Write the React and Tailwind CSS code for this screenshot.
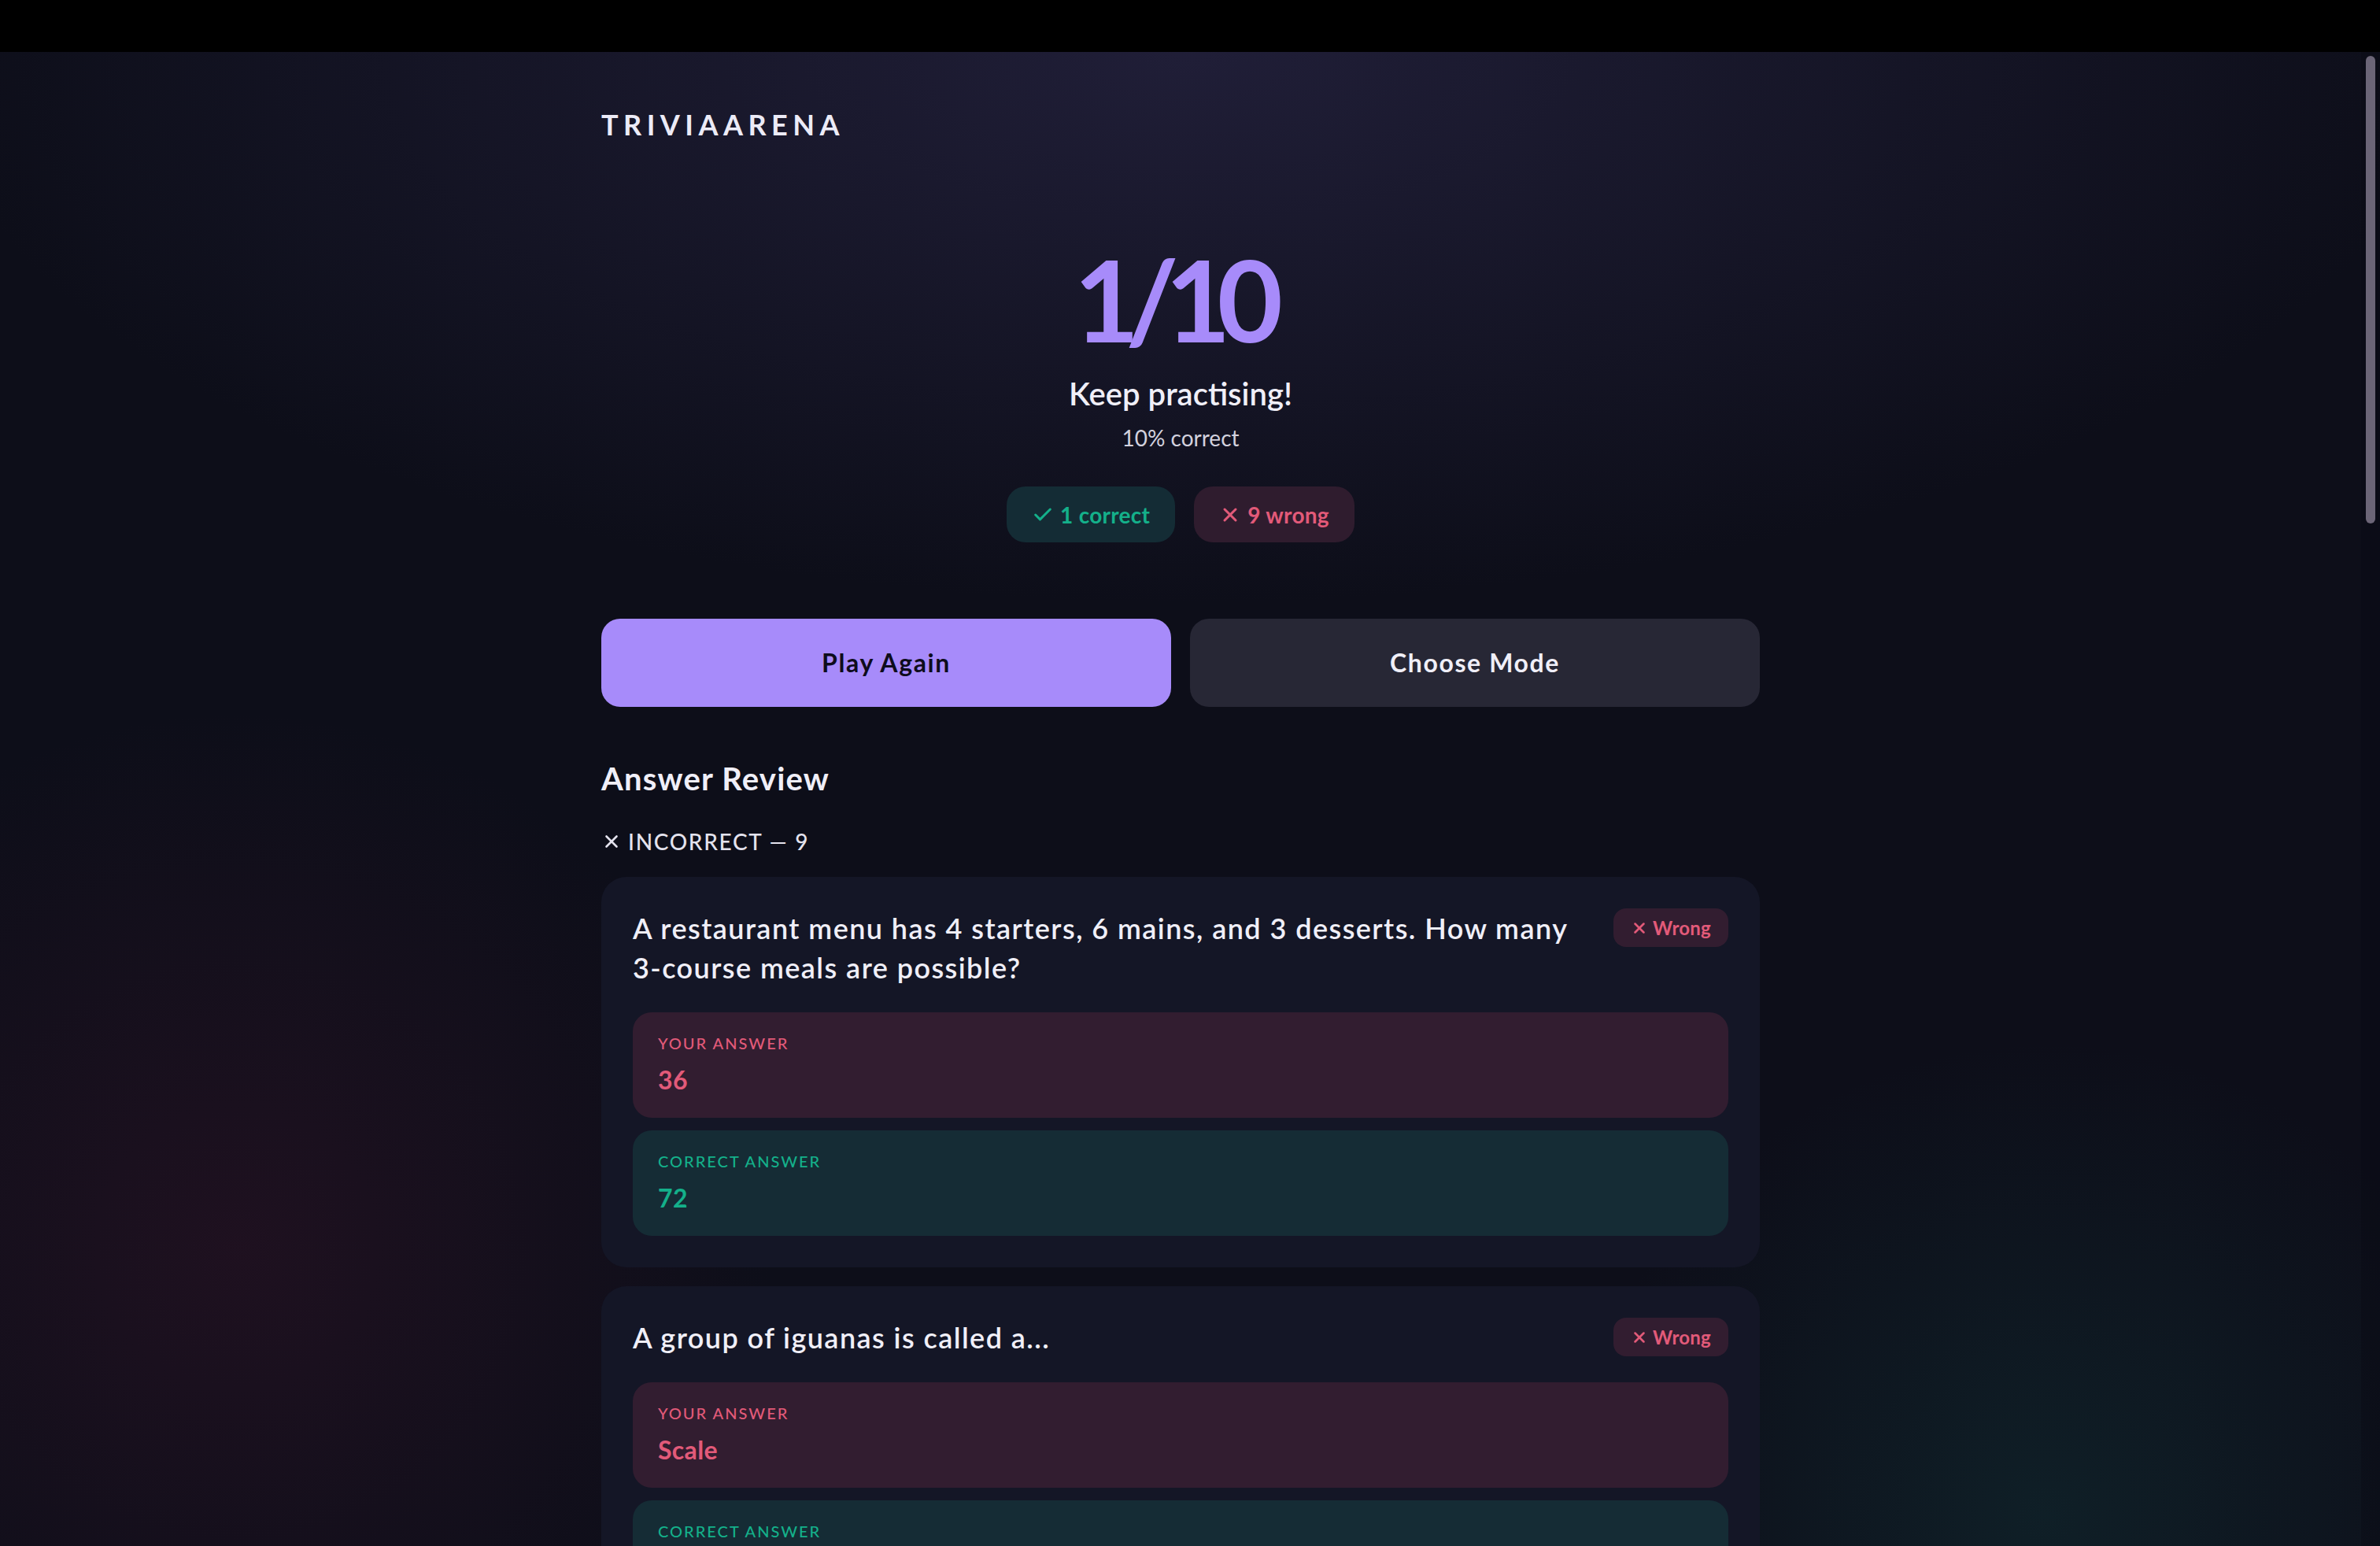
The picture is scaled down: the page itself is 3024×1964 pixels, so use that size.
import { Check, X } from "lucide-react";

const reviews = [
  {
    id: 1,
    question: (
      <>
        A restaurant menu has 4 starters, 6 mains, and 3 desserts. How many <span className="whitespace-nowrap">3-course</span> meals are
        possible?
      </>
    ),
    yours: "36",
    correct: "72",
  },
  {
    id: 2,
    question: "A group of iguanas is called a...",
    yours: "Scale",
    correct: "Mess",
  },
  {
    id: 3,
    question: "What is the capital of Australia?",
    yours: "Sydney",
    correct: "Canberra",
  },
];

function AnswerBox({ wrong, label, value }) {
  return (
    <div className={wrong ? "rounded-[24px] bg-[#321d30] px-[32px] py-[24px]" : "rounded-[24px] bg-[#152c35] px-[32px] py-[24px]"}>
      <p
        className={
          wrong
            ? "text-[20px] leading-[30px] font-medium uppercase tracking-[0.1em] text-[#e25a79]"
            : "text-[20px] leading-[30px] font-medium uppercase tracking-[0.1em] text-[#14b08a]"
        }
      >
        {label}
      </p>
      <p
        className={
          wrong
            ? "mt-[8px] text-[32px] leading-[48px] font-bold tracking-[0.01em] text-[#e25a79]"
            : "mt-[8px] text-[32px] leading-[48px] font-bold tracking-[0.01em] text-[#14b08a]"
        }
      >
        {value}
      </p>
    </div>
  );
}

function ReviewCard({ item }) {
  return (
    <div className="rounded-[32px] bg-[#141626] p-[40px]">
      <div className="mb-[32px] flex items-start justify-between gap-[24px]">
        <p className="text-[36px] leading-[50px] font-semibold tracking-[0.04em] text-[#f0eff8]">{item.question}</p>
        <span className="flex h-[49px] shrink-0 items-center gap-[6px] rounded-[16px] bg-[#321d30] px-[22px] text-[24px] font-bold tracking-[0.01em] text-[#e25a79]">
          <X size={22} strokeWidth={2.8} />
          Wrong
        </span>
      </div>
      <div className="flex flex-col gap-[16px]">
        <AnswerBox wrong label="Your answer" value={item.yours} />
        <AnswerBox label="Correct answer" value={item.correct} />
      </div>
    </div>
  );
}

export default function App() {
  return (
    <div className="flex h-[1964px] w-[3024px] flex-col overflow-hidden bg-black font-['Lato','Noto_Sans',sans-serif]">
      <div className="h-[66px] shrink-0 bg-black" />

      <div className="flex min-h-0 flex-1 bg-[#0d0e19] bg-[radial-gradient(ellipse_1600px_700px_at_50%_0%,rgba(33,31,57,0.95),rgba(33,31,57,0)),radial-gradient(circle_680px_at_300px_1520px,rgba(52,20,40,0.45),rgba(52,20,40,0)),radial-gradient(circle_600px_at_2600px_1860px,rgba(18,52,56,0.45),rgba(18,52,56,0))]">
        <main className="min-w-0 flex-1 overflow-hidden">
          <div className="mx-auto w-[1472px] pt-[64px]">
            <header>
              <p className="text-[36px] leading-[56px] font-bold tracking-[0.18em] text-[#ecebf7]">TRIVIAARENA</p>
            </header>

            <section className="mt-[122px] flex flex-col items-center">
              <p className="pr-[23px] text-[144px] leading-[144px] font-bold tracking-[-0.12em] text-[#a78bfa]">1/10</p>
              <p className="mt-[20px] text-[40px] leading-[56px] font-semibold text-[#f0eff8]">Keep practising!</p>
              <p className="mt-[8px] text-[28px] leading-[40px] text-[#d2d1de]">10% correct</p>

              <div className="mt-[42px] flex gap-[24px]">
                <span className="flex h-[71px] items-center gap-[8px] rounded-[24px] bg-[#142c35] px-[32px] text-[28px] font-bold tracking-[0.01em] text-[#14b08a]">
                  <Check size={28} strokeWidth={2.6} />
                  1 correct
                </span>
                <span className="flex h-[71px] items-center gap-[8px] rounded-[24px] bg-[#2f1c2e] px-[32px] text-[28px] font-bold tracking-[0.01em] text-[#e25a79]">
                  <X size={28} strokeWidth={2.6} />
                  9 wrong
                </span>
              </div>
            </section>

            <div className="mt-[97px] grid grid-cols-2 gap-[24px]">
              <button className="h-[112px] rounded-[24px] bg-[#a78bfa] text-[32px] font-bold tracking-[0.05em] text-[#0e0c1c]">Play Again</button>
              <button className="h-[112px] rounded-[24px] bg-[#272735] text-[32px] font-bold tracking-[0.05em] text-[#f0eff8]">Choose Mode</button>
            </div>

            <h2 className="mt-[63px] text-[40px] leading-[56px] font-bold tracking-[0.03em] text-[#f0eff8]">Answer Review</h2>
            <p className="mt-[32px] flex items-center gap-[8px] text-[28px] leading-[40px] font-medium tracking-[0.06em] text-[#e4e3ee]">
              <X size={26} strokeWidth={2.4} />
              INCORRECT — 9
            </p>

            <div className="mt-[25px] flex flex-col gap-[24px]">
              {reviews.map((item) => (
                <ReviewCard key={item.id} item={item} />
              ))}
            </div>
          </div>
        </main>

        <aside className="w-[24px] shrink-0 bg-[#0b0b14]/40 pt-[5px]">
          <div className="mx-auto h-[594px] w-[12px] rounded-full bg-[#6b6577]" />
        </aside>
      </div>
    </div>
  );
}
